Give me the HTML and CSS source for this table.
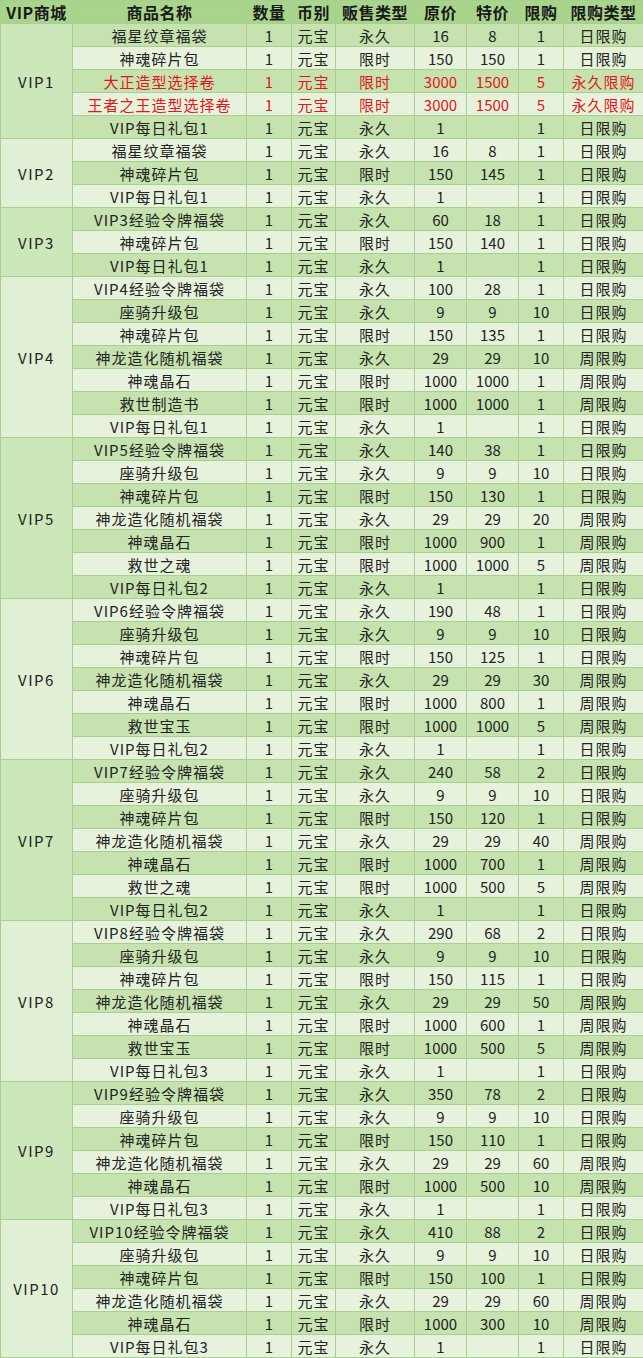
FILE: index.html
```html
<!DOCTYPE html>
<html lang="zh">
<head>
<meta charset="utf-8">
<title>VIP商城</title>
<link rel="stylesheet" href="styles.css">
</head>
<body>
<table class="shop">
<colgroup>
<col class="c-vip"><col class="c-name"><col class="c-qty"><col class="c-cur"><col class="c-type"><col class="c-p1"><col class="c-p2"><col class="c-lim"><col class="c-ltype">
</colgroup>
<thead>
<tr><th>VIP商城</th><th>商品名称</th><th>数量</th><th>币别</th><th>贩售类型</th><th>原价</th><th>特价</th><th>限购</th><th>限购类型</th></tr>
</thead>
<tbody>
<tr class="d"><td class="vip vo" rowspan="5">VIP1</td><td>福星纹章福袋</td><td>1</td><td>元宝</td><td>永久</td><td>16</td><td>8</td><td>1</td><td>日限购</td></tr>
<tr class="l"><td>神魂碎片包</td><td>1</td><td>元宝</td><td>限时</td><td>150</td><td>150</td><td>1</td><td>日限购</td></tr>
<tr class="d red"><td>大正造型选择卷</td><td>1</td><td>元宝</td><td>限时</td><td>3000</td><td>1500</td><td>5</td><td>永久限购</td></tr>
<tr class="l red"><td>王者之王造型选择卷</td><td>1</td><td>元宝</td><td>限时</td><td>3000</td><td>1500</td><td>5</td><td>永久限购</td></tr>
<tr class="d"><td>VIP每日礼包1</td><td>1</td><td>元宝</td><td>永久</td><td>1</td><td></td><td>1</td><td>日限购</td></tr>

<tr class="l"><td class="vip ve" rowspan="3">VIP2</td><td>福星纹章福袋</td><td>1</td><td>元宝</td><td>永久</td><td>16</td><td>8</td><td>1</td><td>日限购</td></tr>
<tr class="d"><td>神魂碎片包</td><td>1</td><td>元宝</td><td>限时</td><td>150</td><td>145</td><td>1</td><td>日限购</td></tr>
<tr class="l"><td>VIP每日礼包1</td><td>1</td><td>元宝</td><td>永久</td><td>1</td><td></td><td>1</td><td>日限购</td></tr>

<tr class="d"><td class="vip vo" rowspan="3">VIP3</td><td>VIP3经验令牌福袋</td><td>1</td><td>元宝</td><td>永久</td><td>60</td><td>18</td><td>1</td><td>日限购</td></tr>
<tr class="l"><td>神魂碎片包</td><td>1</td><td>元宝</td><td>限时</td><td>150</td><td>140</td><td>1</td><td>日限购</td></tr>
<tr class="d"><td>VIP每日礼包1</td><td>1</td><td>元宝</td><td>永久</td><td>1</td><td></td><td>1</td><td>日限购</td></tr>

<tr class="l"><td class="vip ve" rowspan="7">VIP4</td><td>VIP4经验令牌福袋</td><td>1</td><td>元宝</td><td>永久</td><td>100</td><td>28</td><td>1</td><td>日限购</td></tr>
<tr class="d"><td>座骑升级包</td><td>1</td><td>元宝</td><td>永久</td><td>9</td><td>9</td><td>10</td><td>日限购</td></tr>
<tr class="l"><td>神魂碎片包</td><td>1</td><td>元宝</td><td>限时</td><td>150</td><td>135</td><td>1</td><td>日限购</td></tr>
<tr class="d"><td>神龙造化随机福袋</td><td>1</td><td>元宝</td><td>永久</td><td>29</td><td>29</td><td>10</td><td>周限购</td></tr>
<tr class="l"><td>神魂晶石</td><td>1</td><td>元宝</td><td>限时</td><td>1000</td><td>1000</td><td>1</td><td>周限购</td></tr>
<tr class="d"><td>救世制造书</td><td>1</td><td>元宝</td><td>限时</td><td>1000</td><td>1000</td><td>1</td><td>周限购</td></tr>
<tr class="l"><td>VIP每日礼包1</td><td>1</td><td>元宝</td><td>永久</td><td>1</td><td></td><td>1</td><td>日限购</td></tr>

<tr class="d"><td class="vip vo" rowspan="7">VIP5</td><td>VIP5经验令牌福袋</td><td>1</td><td>元宝</td><td>永久</td><td>140</td><td>38</td><td>1</td><td>日限购</td></tr>
<tr class="l"><td>座骑升级包</td><td>1</td><td>元宝</td><td>永久</td><td>9</td><td>9</td><td>10</td><td>日限购</td></tr>
<tr class="d"><td>神魂碎片包</td><td>1</td><td>元宝</td><td>限时</td><td>150</td><td>130</td><td>1</td><td>日限购</td></tr>
<tr class="l"><td>神龙造化随机福袋</td><td>1</td><td>元宝</td><td>永久</td><td>29</td><td>29</td><td>20</td><td>周限购</td></tr>
<tr class="d"><td>神魂晶石</td><td>1</td><td>元宝</td><td>限时</td><td>1000</td><td>900</td><td>1</td><td>周限购</td></tr>
<tr class="l"><td>救世之魂</td><td>1</td><td>元宝</td><td>限时</td><td>1000</td><td>1000</td><td>5</td><td>周限购</td></tr>
<tr class="d"><td>VIP每日礼包2</td><td>1</td><td>元宝</td><td>永久</td><td>1</td><td></td><td>1</td><td>日限购</td></tr>

<tr class="l"><td class="vip ve" rowspan="7">VIP6</td><td>VIP6经验令牌福袋</td><td>1</td><td>元宝</td><td>永久</td><td>190</td><td>48</td><td>1</td><td>日限购</td></tr>
<tr class="d"><td>座骑升级包</td><td>1</td><td>元宝</td><td>永久</td><td>9</td><td>9</td><td>10</td><td>日限购</td></tr>
<tr class="l"><td>神魂碎片包</td><td>1</td><td>元宝</td><td>限时</td><td>150</td><td>125</td><td>1</td><td>日限购</td></tr>
<tr class="d"><td>神龙造化随机福袋</td><td>1</td><td>元宝</td><td>永久</td><td>29</td><td>29</td><td>30</td><td>周限购</td></tr>
<tr class="l"><td>神魂晶石</td><td>1</td><td>元宝</td><td>限时</td><td>1000</td><td>800</td><td>1</td><td>周限购</td></tr>
<tr class="d"><td>救世宝玉</td><td>1</td><td>元宝</td><td>限时</td><td>1000</td><td>1000</td><td>5</td><td>周限购</td></tr>
<tr class="l"><td>VIP每日礼包2</td><td>1</td><td>元宝</td><td>永久</td><td>1</td><td></td><td>1</td><td>日限购</td></tr>

<tr class="d"><td class="vip vo" rowspan="7">VIP7</td><td>VIP7经验令牌福袋</td><td>1</td><td>元宝</td><td>永久</td><td>240</td><td>58</td><td>2</td><td>日限购</td></tr>
<tr class="l"><td>座骑升级包</td><td>1</td><td>元宝</td><td>永久</td><td>9</td><td>9</td><td>10</td><td>日限购</td></tr>
<tr class="d"><td>神魂碎片包</td><td>1</td><td>元宝</td><td>限时</td><td>150</td><td>120</td><td>1</td><td>日限购</td></tr>
<tr class="l"><td>神龙造化随机福袋</td><td>1</td><td>元宝</td><td>永久</td><td>29</td><td>29</td><td>40</td><td>周限购</td></tr>
<tr class="d"><td>神魂晶石</td><td>1</td><td>元宝</td><td>限时</td><td>1000</td><td>700</td><td>1</td><td>周限购</td></tr>
<tr class="l"><td>救世之魂</td><td>1</td><td>元宝</td><td>限时</td><td>1000</td><td>500</td><td>5</td><td>周限购</td></tr>
<tr class="d"><td>VIP每日礼包2</td><td>1</td><td>元宝</td><td>永久</td><td>1</td><td></td><td>1</td><td>日限购</td></tr>

<tr class="l"><td class="vip ve" rowspan="7">VIP8</td><td>VIP8经验令牌福袋</td><td>1</td><td>元宝</td><td>永久</td><td>290</td><td>68</td><td>2</td><td>日限购</td></tr>
<tr class="d"><td>座骑升级包</td><td>1</td><td>元宝</td><td>永久</td><td>9</td><td>9</td><td>10</td><td>日限购</td></tr>
<tr class="l"><td>神魂碎片包</td><td>1</td><td>元宝</td><td>限时</td><td>150</td><td>115</td><td>1</td><td>日限购</td></tr>
<tr class="d"><td>神龙造化随机福袋</td><td>1</td><td>元宝</td><td>永久</td><td>29</td><td>29</td><td>50</td><td>周限购</td></tr>
<tr class="l"><td>神魂晶石</td><td>1</td><td>元宝</td><td>限时</td><td>1000</td><td>600</td><td>1</td><td>周限购</td></tr>
<tr class="d"><td>救世宝玉</td><td>1</td><td>元宝</td><td>限时</td><td>1000</td><td>500</td><td>5</td><td>周限购</td></tr>
<tr class="l"><td>VIP每日礼包3</td><td>1</td><td>元宝</td><td>永久</td><td>1</td><td></td><td>1</td><td>日限购</td></tr>

<tr class="d"><td class="vip vo" rowspan="6">VIP9</td><td>VIP9经验令牌福袋</td><td>1</td><td>元宝</td><td>永久</td><td>350</td><td>78</td><td>2</td><td>日限购</td></tr>
<tr class="l"><td>座骑升级包</td><td>1</td><td>元宝</td><td>永久</td><td>9</td><td>9</td><td>10</td><td>日限购</td></tr>
<tr class="d"><td>神魂碎片包</td><td>1</td><td>元宝</td><td>限时</td><td>150</td><td>110</td><td>1</td><td>日限购</td></tr>
<tr class="l"><td>神龙造化随机福袋</td><td>1</td><td>元宝</td><td>永久</td><td>29</td><td>29</td><td>60</td><td>周限购</td></tr>
<tr class="d"><td>神魂晶石</td><td>1</td><td>元宝</td><td>限时</td><td>1000</td><td>500</td><td>10</td><td>周限购</td></tr>
<tr class="l"><td>VIP每日礼包3</td><td>1</td><td>元宝</td><td>永久</td><td>1</td><td></td><td>1</td><td>日限购</td></tr>

<tr class="d"><td class="vip ve" rowspan="6">VIP10</td><td>VIP10经验令牌福袋</td><td>1</td><td>元宝</td><td>永久</td><td>410</td><td>88</td><td>2</td><td>日限购</td></tr>
<tr class="l"><td>座骑升级包</td><td>1</td><td>元宝</td><td>永久</td><td>9</td><td>9</td><td>10</td><td>日限购</td></tr>
<tr class="d"><td>神魂碎片包</td><td>1</td><td>元宝</td><td>限时</td><td>150</td><td>100</td><td>1</td><td>日限购</td></tr>
<tr class="l"><td>神龙造化随机福袋</td><td>1</td><td>元宝</td><td>永久</td><td>29</td><td>29</td><td>60</td><td>周限购</td></tr>
<tr class="d"><td>神魂晶石</td><td>1</td><td>元宝</td><td>限时</td><td>1000</td><td>300</td><td>10</td><td>周限购</td></tr>
<tr class="l"><td>VIP每日礼包3</td><td>1</td><td>元宝</td><td>永久</td><td>1</td><td></td><td>1</td><td>日限购</td></tr>
</tbody>
</table>
</body>
</html>
```

FILE: styles.css
```css
html, body {
  margin: 0;
  padding: 0;
  background: #ffffff;
}

.shop {
  border-collapse: collapse;
  table-layout: fixed;
  width: 643px;
  font-family: "Noto Sans CJK SC", "Microsoft YaHei", sans-serif;
  font-size: 15px;
  letter-spacing: 1px;
  color: #232323;
}

.c-vip { width: 72px; }
.c-name { width: 174px; }
.c-qty { width: 45px; }
.c-cur { width: 44px; }
.c-type { width: 79px; }
.c-p1 { width: 52px; }
.c-p2 { width: 52px; }
.c-lim { width: 45px; }
.c-ltype { width: 80px; }

.shop th,
.shop td {
  border: 1px solid #a7cf92;
  height: 23px;
  padding: 0;
  text-align: center;
  vertical-align: middle;
  line-height: 21px;
  white-space: nowrap;
  overflow: hidden;
  box-sizing: border-box;
}

.shop th {
  background: #a9d48c;
  font-weight: bold;
  font-size: 16px;
  letter-spacing: 0.5px;
  color: #1a1a1a;
}

/* numeric columns: 数量, 原价, 特价, 限购 */
.shop tbody td:nth-last-child(7),
.shop tbody td:nth-last-child(4),
.shop tbody td:nth-last-child(3),
.shop tbody td:nth-last-child(2) {
  letter-spacing: 0;
}

.shop tr.d td {
  background: #c5e2af;
}

.shop tr.l td {
  background: #e6f2dc;
}

.shop tr td.vip {
  letter-spacing: 1.5px;
}

.shop tr td.vo {
  background: #cce7b9;
}

.shop tr td.ve {
  background: #e1efd5;
}

.shop tr.red td {
  color: #e3161b;
}
```
